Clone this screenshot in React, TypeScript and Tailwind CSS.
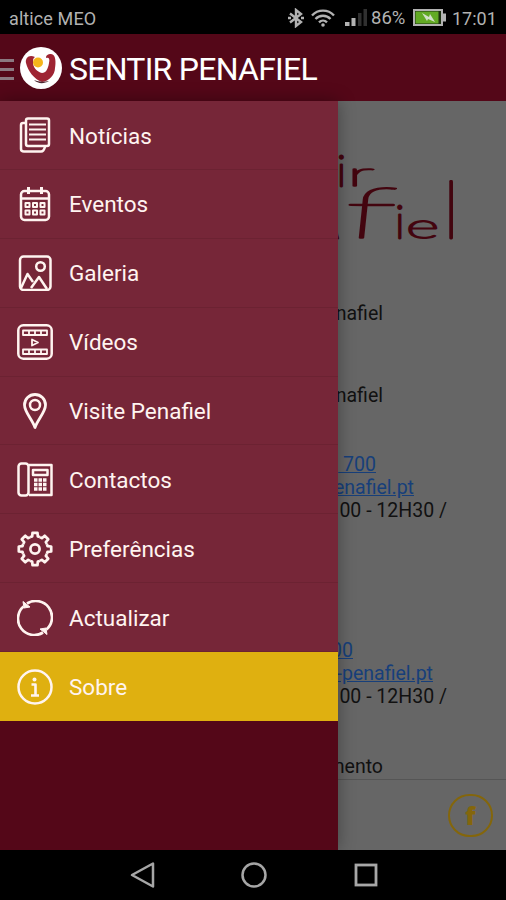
import type { ReactNode } from "react";

const menu = [
  { label: "Notícias", icon: <NewsIcon /> },
  { label: "Eventos", icon: <CalendarIcon /> },
  { label: "Galeria", icon: <GalleryIcon /> },
  { label: "Vídeos", icon: <VideoIcon /> },
  { label: "Visite Penafiel", icon: <PinIcon /> },
  { label: "Contactos", icon: <PhoneIcon /> },
  { label: "Preferências", icon: <GearIcon /> },
  { label: "Actualizar", icon: <RefreshIcon /> },
  { label: "Sobre", icon: <InfoIcon />, active: true },
];

export default function App() {
  return (
    <div className="flex h-[900px] w-[506px] flex-col overflow-hidden bg-black font-['Roboto',sans-serif]">
      <StatusBar />
      <Header />
      <div className="flex h-[749px] shrink-0">
        <Drawer />
        <Content />
      </div>
      <NavBar />
    </div>
  );
}

function StatusBar() {
  return (
    <div className="flex h-[34px] shrink-0 items-center pt-[2px] pr-[9px] pl-[9px] text-[18px] text-[#b2b2b2]">
      <span className="tracking-[0.1px]">altice MEO</span>
      <div className="ml-auto flex items-center">
        <svg width="16" height="20" viewBox="0 0 16 20" fill="none" stroke="currentColor" strokeWidth="2.4">
          <path d="M2 5.5 13 14 8 18V2l5 4L2 14.5" />
          <path d="M0 10h3M13 10h3" />
        </svg>
        <svg className="ml-[6px]" width="26" height="20" viewBox="0 0 26 20" fill="none" stroke="currentColor" strokeWidth="2.4">
          <path d="M2 7.5C8 1 18 1 24 7.5M5.5 11c4-4.3 11-4.3 15 0M9 14.3c2.3-2.3 5.7-2.3 8 0" />
          <circle cx="13" cy="17" r="1.8" fill="currentColor" stroke="none" />
        </svg>
        <svg className="ml-[9px]" width="23" height="20" viewBox="0 0 23 20" fill="currentColor">
          <rect x="0" y="14" width="4.5" height="4" />
          <rect x="6.5" y="10" width="4" height="8" />
          <rect x="13" y="5" width="3.5" height="13" fill="#303030" />
          <rect x="18.5" y="1" width="3.5" height="17" fill="#303030" />
        </svg>
        <span className="mt-[1px] ml-[3px] w-[37px] text-[18.5px] whitespace-nowrap">86%</span>
        <svg className="ml-[5px]" width="33" height="18" viewBox="0 0 33 18">
          <rect x="1" y="1" width="28" height="15" fill="#1c3010" stroke="#b2b2b2" strokeWidth="2" />
          <rect x="2.5" y="2.5" width="23" height="12" fill="#62aa24" />
          <rect x="30" y="4.5" width="3" height="8" fill="#b2b2b2" />
          <path d="m9 4 7 4 1-3 5 8-7-3-1 2z" fill="#d3dfca" />
        </svg>
        <span className="ml-[6px] w-[45px] whitespace-nowrap">17:01</span>
      </div>
    </div>
  );
}

function Header() {
  return (
    <header className="flex h-[67px] shrink-0 items-center bg-[#540718]">
      <div className="mt-[4px] flex w-[14px] flex-col gap-[6px]">
        <span className="h-[3px] bg-[#8b7880]" />
        <span className="h-[3px] bg-[#8b7880]" />
        <span className="h-[3px] bg-[#8b7880]" />
      </div>
      <svg className="ml-[6px]" width="42" height="44" viewBox="0 0 42 44">
        <circle cx="21" cy="22" r="21" fill="#fff" />
        <path
          d="M15 11C9 8 5 12 6 17c2 8 8 16 16 19 7-1 13-7 13-14 1-5 1-14-4-14-3 0-5 1-5 4 3-1 4 1 3 5-1 6-3 10-7 10-5-1-9-6-9-10 0-3 0-5 2-6z"
          fill="#9e2433"
        />
        <path d="M14 34c4 4 10 4 15 1-5 1-10 1-15-1z" fill="#4c2630" />
        <circle cx="18" cy="16.5" r="5" fill="#f6b51b" />
      </svg>
      <h1 className="mt-[2px] ml-[7px] text-[32px] tracking-[-0.75px] whitespace-nowrap text-white">SENTIR PENAFIEL</h1>
    </header>
  );
}

function Drawer() {
  return (
    <nav className="relative z-10 w-[338px] shrink-0 bg-[#540718] shadow-[0_0_16px_rgba(0,0,0,0.35)]">
      {menu.map((item) => (
        <a
          key={item.label}
          href="#"
          className={
            item.active
              ? "flex h-[68.9px] items-center bg-[#dfb010] pl-[17px]"
              : "flex h-[68.9px] items-center border-b border-[#6c2232] bg-[#762638] pl-[17px]"
          }
        >
          {item.icon}
          <span className="mt-[3px] ml-[16px] text-[22.5px] whitespace-nowrap text-[#fff4f0]">{item.label}</span>
        </a>
      ))}
    </nav>
  );
}

function Content() {
  return (
    <main className="flex flex-1 flex-col overflow-hidden bg-[#666] text-[19.5px] leading-[23px] text-[#111]">
      <Wordmark />
      <Line className="mt-[41px] w-[45px]">nafiel</Line>
      <Line className="mt-[59px] w-[45px]">nafiel</Line>
      <Line className="mt-[46px] w-[38px] text-[#173f7a] underline">&nbsp;700</Line>
      <Line className="w-[76px] text-[#173f7a] underline">enafiel.pt</Line>
      <Line className="w-[109px]">00 - 12H30 /</Line>
      <Line className="mt-[117px] w-[15px] text-[#173f7a] underline">00</Line>
      <Line className="w-[95px] text-[#173f7a] underline">-penafiel.pt</Line>
      <Line className="w-[109px]">00 - 12H30 /</Line>
      <Line className="mt-[47px] w-[45px]">mento</Line>
      <div className="mt-auto flex h-[71px] shrink-0 items-center justify-end border-t border-[#555] pr-[13px]">
        <div className="flex h-[43px] w-[45px] items-center justify-center rounded-full border-2 border-[#84660b] text-[#84660b]">
          <span className="font-['Open_Sans',sans-serif] text-[25px] font-extrabold">f</span>
        </div>
      </div>
    </main>
  );
}

function Line({ className, children }: { className: string; children: ReactNode }) {
  return (
    <p className={`flex h-[23px] shrink-0 justify-end whitespace-nowrap ${className}`}>
      <span>{children}</span>
    </p>
  );
}

const letters = [
  { char: "i", transform: "translate(-1 85)", size: 42 },
  { char: "r", transform: "translate(9 85) scale(2.2 0.95)", size: 36 },
  { char: "a", transform: "translate(-15 137) skewX(15)", size: 38 },
  { char: "f", transform: "translate(4 137) skewX(-6) scale(2.2 1)", size: 71 },
  { char: "i", transform: "translate(57 137)", size: 46 },
  { char: "e", transform: "translate(68 137) scale(1.6 0.85)", size: 40 },
  { char: "l", transform: "translate(105 137)", size: 78 },
];

function Wordmark() {
  return (
    <svg className="h-[160px] w-[168px] shrink-0" viewBox="0 0 168 160" fill="#43050f" stroke="#43050f">
      {letters.map((l, i) => (
        <text
          key={i}
          transform={l.transform}
          fontSize={l.size}
          fontFamily="Lato, sans-serif"
          fontWeight="100"
          strokeWidth="2.8"
          strokeLinejoin="round"
          vectorEffect="non-scaling-stroke"
        >
          {l.char}
        </text>
      ))}
    </svg>
  );
}

function NavBar() {
  return (
    <div className="flex h-[50px] shrink-0 items-center justify-center gap-[86px] pl-[1px] text-[#a7a7a7]">
      <svg width="26" height="28" viewBox="0 0 26 28" fill="none" stroke="currentColor" strokeWidth="2.5" strokeLinejoin="round">
        <path d="M24 2.5v23L3 14z" />
      </svg>
      <svg width="26" height="28" viewBox="0 0 26 28" fill="none" stroke="currentColor" strokeWidth="2.5">
        <circle cx="13" cy="14" r="11.5" />
      </svg>
      <svg width="26" height="28" viewBox="0 0 26 28" fill="none" stroke="currentColor" strokeWidth="2.8">
        <rect x="3" y="4" width="20" height="20" />
      </svg>
    </div>
  );
}

function Icon({ children }: { children: ReactNode }) {
  return (
    <svg
      className="mt-[1px] shrink-0"
      width="36"
      height="36"
      viewBox="0 0 36 36"
      fill="none"
      stroke="#fff4f0"
      strokeWidth="2.5"
      strokeLinejoin="round"
    >
      {children}
    </svg>
  );
}

function NewsIcon() {
  return (
    <Icon>
      <rect x="9" y="1.5" width="23" height="27.5" rx="2" />
      <path d="M9 6H6Q4 6 4 8v24q0 2.5 3 2.5h17q3 0 4-5" />
      <path d="M12 7.5h17M12 12.5h17M12 17.5h17M12 22.5h17" strokeWidth="2" />
    </Icon>
  );
}

function CalendarIcon() {
  return (
    <Icon>
      <rect x="4" y="5" width="28" height="29" rx="3.5" />
      <path d="M4 12.5h28" />
      <path d="M11.5 1v7M24.5 1v7" strokeWidth="3" />
      <g strokeWidth="2">
        <rect x="8.5" y="17" width="4" height="4" />
        <rect x="16" y="17" width="4" height="4" />
        <rect x="23.5" y="17" width="4" height="4" />
        <rect x="8.5" y="24.5" width="4" height="4" />
        <rect x="16" y="24.5" width="4" height="4" />
        <rect x="23.5" y="24.5" width="4" height="4" />
      </g>
    </Icon>
  );
}

function GalleryIcon() {
  return (
    <Icon>
      <rect x="3" y="1.5" width="30.5" height="33.5" rx="3.5" />
      <circle cx="23.5" cy="11.5" r="4.3" />
      <path d="m4 33 6.5-14 5.5 8M14 33l8-11 8 12" />
    </Icon>
  );
}

function VideoIcon() {
  return (
    <Icon>
      <rect x="1.3" y="1.3" width="33.4" height="33.4" rx="5" />
      <g strokeWidth="1.8">
        <path d="M6 6.5h24v4.5H6zM12 6.5v4.5M18 6.5v4.5M24 6.5v4.5M6 25.5h24v4.5H6zM12 25.5v4.5M18 25.5v4.5M24 25.5v4.5" />
        <path d="m15 15.500 6 3-6 3z" />
      </g>
    </Icon>
  );
}

function PinIcon() {
  return (
    <Icon>
      <path d="M18 34.5C15.5 27 7.5 19 7.5 12a10.5 10.5 0 0 1 21 0c0 7-8 15-10.5 22.5z" strokeWidth="2.8" />
      <circle cx="18" cy="12" r="5" />
    </Icon>
  );
}

function PhoneIcon() {
  return (
    <Icon>
      <rect x="1.5" y="1.5" width="10" height="32" rx="3" />
      <path d="M12 3h22.5v30H12" />
      <rect x="16" y="8" width="14.5" height="5" />
      <path
        d="M17 18h3.5M21.5 18h3.5M26 18h3.5M17 22.5h3.5M21.5 22.5h3.5M26 22.5h3.5M17 27h3.5M21.5 27h3.5M26 27h3.5"
        strokeWidth="3.6"
      />
    </Icon>
  );
}

function GearIcon() {
  return (
    <Icon>
      {Array.from({ length: 8 }, (_, i) => (
        <path
          key={i}
          transform={`rotate(${i * 45} 18 18)`}
          d="M13.05 6.05 15.2 5.5 15.5 1.8h5l.3 3.7 2.15.55"
          strokeWidth="2.7"
        />
      ))}
      <circle cx="18" cy="18" r="4.6" strokeWidth="2.7" />
    </Icon>
  );
}

function RefreshIcon() {
  return (
    <Icon>
      <path d="M10 3.5a16.3 16.3 0 0 1 19.5 26M26 32.5A16.3 16.3 0 0 1 6.5 6.5" strokeWidth="2.7" />
      <path d="m6 1.500 1 6.500 6-1zM30 34.500l-1-6.500-6 1z" fill="#fff4f0" strokeWidth="1" />
    </Icon>
  );
}

function InfoIcon() {
  return (
    <Icon>
      <circle cx="18" cy="18" r="16.5" />
      <circle cx="17.5" cy="10.5" r="2" fill="#fff4f0" stroke="none" />
      <path d="M14.5 15.5h4v11M14 26.5h8" strokeWidth="2.6" />
    </Icon>
  );
}
